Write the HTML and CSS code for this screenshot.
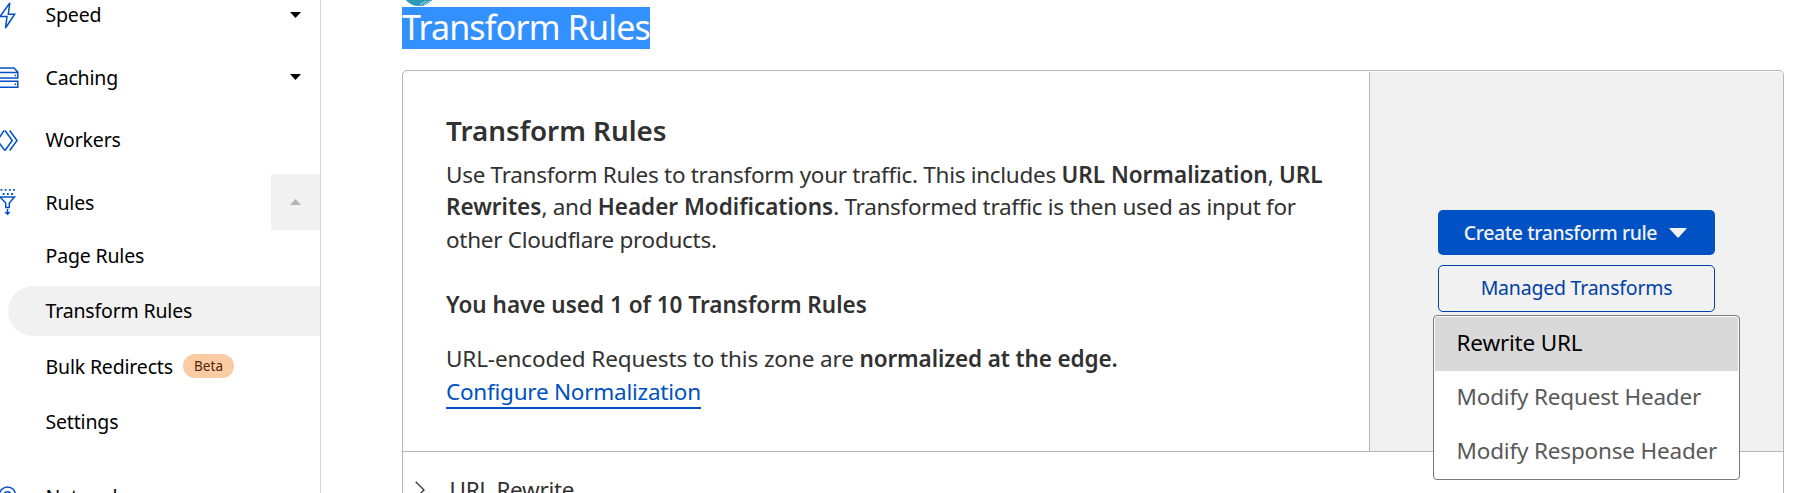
FILE: index.html
```
<!DOCTYPE html>
<html lang="en">
<head>
<meta charset="utf-8">
<title>Transform Rules</title>
<link rel="stylesheet" href="styles.css">
</head>
<body>
<nav class="sidebar">
  <div class="nav-item">
    <svg class="nav-icon" viewBox="0 0 20 28" width="20" height="28"><path d="M9.800 2 0 15.500H7L5.500 27 14.700 13.200H8.300Z"/></svg>
    <span class="nav-label">Speed</span>
    <span class="toggle"><svg width="11" height="6" viewBox="0 0 11 6"><path d="M0 0H11L5.500 6Z"/></svg></span>
  </div>
  <div class="nav-item">
    <svg class="nav-icon" viewBox="0 0 20 28" width="20" height="28"><path d="M-4 9 0 5H14L17.800 9V15H-4M-4 9.500H17.800M-4 18.200H17.800V24.200H-4"/><path d="M14.500 12.500H16M14.500 21.200H16"/></svg>
    <span class="nav-label">Caching</span>
    <span class="toggle"><svg width="11" height="6" viewBox="0 0 11 6"><path d="M0 0H11L5.500 6Z"/></svg></span>
  </div>
  <div class="nav-item">
    <svg class="nav-icon" viewBox="0 0 20 28" width="20" height="28"><path d="M4 4.500-2.500 14.500 4.800 24.500M5 4.500 12.200 14.500 5 24.500M9.700 4.500 17 14.500 9.700 24.500"/></svg>
    <span class="nav-label">Workers</span>
  </div>
  <div class="nav-item">
    <svg class="nav-icon" viewBox="0 0 20 28" width="20" height="28"><path class="dots" d="M.500 1.800H15M2.700 6H13.500"/><path d="M0 8.900H14.500L9.300 15V19.500H5.700V15L0 9M7.500 21V26M5.300 24 7.500 26.200 9.700 24"/></svg>
    <span class="nav-label">Rules</span>
    <span class="toggle toggle-open"><svg width="11" height="6" viewBox="0 0 11 6"><path d="M0 6H11L5.500 0Z"/></svg></span>
  </div>
  <div class="subnav">
    <div class="sub-item">Page Rules</div>
    <div class="sub-item active"><span>Transform Rules</span></div>
    <div class="sub-item">Bulk Redirects<span class="beta">Beta</span></div>
    <div class="sub-item">Settings</div>
  </div>
  <div class="nav-item">
    <svg class="nav-icon" viewBox="0 0 20 28" width="20" height="28"><circle cx="7.500" cy="13" r="8"/><circle cx="7.500" cy="13" r="3.300"/></svg>
    <span class="nav-label">Network</span>
  </div>
</nav>
<main class="main">
  <svg class="badge" width="36" height="6" viewBox="0 0 36 6"><circle cx="17" cy="-11" r="17.500"/><path d="M18 4.800 24 1M22 4.800 28 1"/></svg>
  <h1 class="title"><span>Transform Rules</span></h1>
  <section class="card">
    <div class="overview">
      <div class="info">
        <h2>Transform Rules</h2>
        <p class="desc">Use Transform Rules to transform your traffic. This includes <b>URL Normalization</b>, <b>URL<br>Rewrites</b>, and <b>Header Modifications</b>. Transformed traffic is then used as input for<br>other Cloudflare products.</p>
        <p class="usage"><b>You have used 1 of 10 Transform Rules</b></p>
        <p class="normal"><span class="loose">URL-encoded Requests to this zone are </span><b class="tight">normalized at the edge.</b><br><a class="link">Configure Normalization</a></p>
      </div>
      <div class="actions">
        <button class="btn primary">Create transform rule<svg width="18" height="10" viewBox="0 0 18 10"><path d="M1 0H17Q18 0 17.300 1L10 9Q9 10 8 9L.700 1Q0 0 1 0Z"/></svg></button>
        <button class="btn secondary">Managed Transforms</button>
        <div class="menu">
          <div class="menu-item selected">Rewrite URL</div>
          <div class="menu-item">Modify Request Header</div>
          <div class="menu-item">Modify Response Header</div>
        </div>
      </div>
    </div>
    <div class="rule-row">
      <svg width="10" height="18" viewBox="0 0 10 18"><path d="M.700.700 9 9 .700 17.300"/></svg>
      <span>URL Rewrite</span>
    </div>
  </section>
</main>
</body>
</html>
```
FILE: styles.css
```
* { box-sizing: border-box; }
body {
  margin: 0;
  height: 493px;
  overflow: hidden;
  display: flex;
  background: #fff;
  color: #313131;
  font-family: "Noto Sans", "Open Sans", sans-serif;
}
h1, h2, p { margin: 0; }
b { font-weight: 600; letter-spacing: 0; }

.sidebar {
  width: 321px;
  height: 560px;
  flex: none;
  margin-top: -16.5px;
  border-right: 1px solid #d5d5d5;
  color: #000;
  font-size: 19.5px;
  letter-spacing: -0.17px;
}
.nav-item { display: flex; align-items: center; height: 62.5px; }
.nav-icon { flex: none; margin-right: 25.5px; fill: none; stroke: #0051c3; stroke-width: 1.5; }
.dots { stroke-width: 1.8; stroke-dasharray: 1.8 2.4; }
.nav-label { flex: 1; }
.toggle { width: 49px; height: 56px; display: flex; align-items: center; justify-content: center; }
.toggle-open { background: #f1f1f1; fill: #b6b6b6; }
.subnav { margin-top: -5.5px; padding-bottom: 15.5px; }
.sub-item { display: flex; align-items: center; height: 55.4px; padding-left: 45.5px; }
.active { height: 50px; margin: 2.7px 0 2.7px 8px; padding-left: 37.5px; border-radius: 25px 0 0 25px; background: #f1f1f1; }
.active span { margin-top: -2px; }
.beta {
  margin-left: 10px;
  padding: 0 11px;
  border-radius: 12px;
  background: #fbcca3;
  color: #521f08;
  font-size: 13.5px;
  line-height: 24px;
  letter-spacing: .1px;
}

.main { flex: 1; padding: 0 11px 0 81px; }
.badge { display: block; height: 6px; margin-bottom: 1px; fill: #2b9bb9; stroke: #fff; stroke-width: .7; }
.title { height: 42px; font-size: 34px; line-height: 41px; font-weight: 400; letter-spacing: -0.82px; color: #fff; }
.title span { display: inline-block; height: 42px; background: #3390ff; }

.card {
  height: 500px;
  margin-top: 21px;
  border: 1px solid #b6b6b6;
  border-radius: 5px;
  font-size: 22.5px;
  line-height: 32.5px;
}
.overview { display: flex; height: 381px; border-bottom: 1px solid #b6b6b6; }
.info { width: 966px; padding: 39px 0 0 43px; white-space: nowrap; }
.info h2 { font-size: 27.8px; line-height: 40px; font-weight: 600; }
.desc { margin-top: 8.5px; letter-spacing: -0.29px; }
.usage { margin-top: 33px; }
.normal { margin-top: 21.5px; }
.loose { letter-spacing: -0.12px; }
.tight { letter-spacing: -0.12px; }
.link { color: #0051c3; border-bottom: 2px solid #0051c3; letter-spacing: -0.24px; }

.actions {
  position: relative;
  flex: 1;
  display: flex;
  flex-direction: column;
  gap: 10px;
  margin-top: 1px;
  padding: 138px 68px 0 68px;
  border-left: 1px solid #b6b6b6;
  border-top-right-radius: 4px;
  background: #f1f1f1;
}
.btn {
  display: flex;
  align-items: center;
  justify-content: center;
  border-radius: 5px;
  font: 400 19.5px/26px "Noto Sans", "Open Sans", sans-serif;
  letter-spacing: -0.22px;
}
.primary { height: 45px; gap: 12px; padding: 0 8px 0 6px; border: 0; background: #0051c3; color: #f2f2f2; fill: #f2f2f2; font-weight: 500; letter-spacing: -0.42px; }
.secondary { height: 47px; padding-bottom: 2px; border: 1px solid #003fa6; background: transparent; color: #003fa6; }
.menu {
  position: absolute;
  top: 243px;
  left: 63px;
  width: 307px;
  height: 165px;
  padding: 1px;
  border: 1px solid #797979;
  border-radius: 4px;
  background: #fff;
  color: #595959;
  letter-spacing: -0.18px;
}
.menu-item { height: 54px; padding: 10px 0 0 21.500px; }
.selected { background: #d9d9d9; color: #000; }

.rule-row { display: flex; align-items: center; gap: 24.5px; padding: 22px 0 0 12px; letter-spacing: -0.3px; }
.rule-row svg { fill: none; stroke: #313131; stroke-width: 1.3; }
```
